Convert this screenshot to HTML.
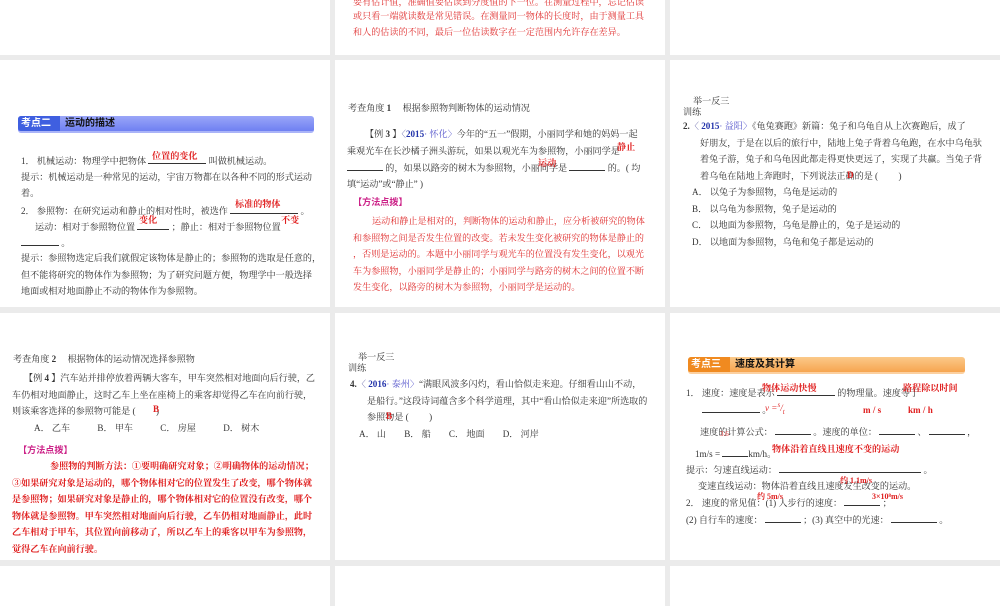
<!DOCTYPE html>
<html><head><meta charset="utf-8"><style>
body{margin:0;width:1000px;height:600px;background:#ebebeb;position:relative;overflow:hidden;font-family:"Liberation Serif","Noto Serif CJK SC",serif;font-size:9.1px;color:#333}
.p{position:absolute;background:#fff;overflow:hidden}
.t{position:absolute;white-space:nowrap;line-height:12px}
.r{color:#e03030}
.rb{color:#e02020;font-weight:bold}
.b{color:#2233aa;font-weight:bold}
.u{display:inline-block;border-bottom:1px solid #333;height:9px;vertical-align:baseline}
.m{color:#cc2288;font-weight:bold;font-family:"Liberation Sans","Noto Sans CJK SC",sans-serif}
</style></head><body>
<div class="p" style="left:0;top:0;width:330px;height:55px"></div>
<div class="p" style="left:335px;top:0;width:330px;height:55px">
<div class="t r" style="left:18px;top:-4px">要有估计值，准确值要估读到分度值的下一位。在测量过程中，忘记估读</div>
<div class="t r" style="left:18px;top:10px">或只看一端就读数是常见错误。在测量同一物体的长度时，由于测量工具</div>
<div class="t r" style="left:18px;top:26px">和人的估读的不同，最后一位估读数字在一定范围内允许存在差异。</div>
</div>
<div class="p" style="left:670px;top:0;width:330px;height:55px"></div>

<div class="p" style="left:0;top:60px;width:330px;height:247px">
<div style="position:absolute;left:18px;top:56px;width:296px;height:15px;background:linear-gradient(#9aa6f8,#6f80f2);border-radius:3px;border-bottom:2px solid #aab4f8"></div>
<div style="position:absolute;left:18px;top:56px;width:42px;height:15px;background:#3f5fe0;border-radius:3px 0 0 3px"></div>
<div class="t" style="left:21px;top:58px;color:#fff;font-weight:bold;font-family:'Liberation Sans','Noto Sans CJK SC',sans-serif;font-size:10px">考点二</div>
<div class="t" style="left:65px;top:58px;color:#111;font-weight:bold;font-family:'Liberation Sans','Noto Sans CJK SC',sans-serif;font-size:10px">运动的描述</div>
<div class="t" style="left:21px;top:94px">1． 机械运动：物理学中把物体 <span class="u" style="width:58px"></span> 叫做机械运动。</div>
<div class="t rb" style="left:152px;top:90px">位置的变化</div>
<div class="t" style="left:21px;top:111px">提示：机械运动是一种常见的运动，宇宙万物都在以各种不同的形式运动</div>
<div class="t" style="left:21px;top:127px">着。</div>
<div class="t" style="left:21px;top:144px">2． 参照物：在研究运动和静止的相对性时，被选作 <span class="u" style="width:68px"></span> 。</div>
<div class="t rb" style="left:235px;top:138px">标准的物体</div>
<div class="t" style="left:35px;top:160px">运动：相对于参照物位置 <span class="u" style="width:32px"></span> ；静止：相对于参照物位置</div>
<div class="t rb" style="left:139px;top:154px">变化</div>
<div class="t rb" style="left:281px;top:154px">不变</div>
<div class="t" style="left:21px;top:176px"><span class="u" style="width:38px"></span> 。</div>
<div class="t" style="left:21px;top:192px">提示：参照物选定后我们就假定该物体是静止的；参照物的选取是任意的，</div>
<div class="t" style="left:21px;top:209px">但不能将研究的物体作为参照物；为了研究问题方便，物理学中一般选择</div>
<div class="t" style="left:21px;top:225px">地面或相对地面静止不动的物体作为参照物。</div>
</div>

<div class="p" style="left:335px;top:60px;width:330px;height:247px">
<div class="t" style="left:13px;top:42px">考查角度 <b>1</b>　 根据参照物判断物体的运动情况</div>
<div class="t" style="left:30px;top:68px">【例 <b>3</b> 】<span style="color:#66a">〈</span><span class="b">2015</span><span style="color:#55c">· 怀化〉</span>今年的“五一”假期，小丽同学和她的妈妈一起</div>
<div class="t" style="left:12px;top:85px">乘观光车在长沙橘子洲头游玩，如果以观光车为参照物，小丽同学是</div>
<div class="t rb" style="left:282px;top:81px">静止</div>
<div class="t" style="left:12px;top:101px"><span class="u" style="width:36px"></span> 的，如果以路旁的树木为参照物，小丽同学是 <span class="u" style="width:36px"></span> 的。( 均</div>
<div class="t rb" style="left:203px;top:97px">运动</div>
<div class="t" style="left:12px;top:118px">填“运动”或“静止” )</div>
<div class="t m" style="left:18px;top:136px">【方法点拨】</div>
<div class="t r" style="left:37px;top:155px">运动和静止是相对的，判断物体的运动和静止，应分析被研究的物体</div>
<div class="t r" style="left:18px;top:172px">和参照物之间是否发生位置的改变。若未发生变化被研究的物体是静止的</div>
<div class="t r" style="left:18px;top:188px">，否则是运动的。本题中小丽同学与观光车的位置没有发生变化，以观光</div>
<div class="t r" style="left:18px;top:205px">车为参照物，小丽同学是静止的；小丽同学与路旁的树木之间的位置不断</div>
<div class="t r" style="left:18px;top:221px">发生变化，以路旁的树木为参照物，小丽同学是运动的。</div>
</div>

<div class="p" style="left:670px;top:60px;width:330px;height:247px">
<div class="t" style="left:23px;top:35px">举一反三</div>
<div class="t" style="left:13px;top:46px">训练</div>
<div class="t" style="left:13px;top:60px"><b>2.</b><span style="color:#66a">〈</span> <span class="b">2015</span><span style="color:#55c">· 益阳〉</span>《龟兔赛跑》新篇：兔子和乌龟自从上次赛跑后，成了</div>
<div class="t" style="left:30px;top:77px">好朋友，于是在以后的旅行中，陆地上兔子背着乌龟跑，在水中乌龟驮</div>
<div class="t" style="left:30px;top:93px">着兔子游，兔子和乌龟因此都走得更快更远了，实现了共赢。当兔子背</div>
<div class="t" style="left:30px;top:110px">着乌龟在陆地上奔跑时，下列说法正确的是 (　　 )</div>
<div class="t rb" style="left:177px;top:109px">D</div>
<div class="t" style="left:22px;top:126px">A． 以兔子为参照物，乌龟是运动的</div>
<div class="t" style="left:22px;top:143px">B． 以乌龟为参照物，兔子是运动的</div>
<div class="t" style="left:22px;top:159px">C． 以地面为参照物，乌龟是静止的，兔子是运动的</div>
<div class="t" style="left:22px;top:176px">D． 以地面为参照物，乌龟和兔子都是运动的</div>
</div>

<div class="p" style="left:0;top:313px;width:330px;height:247px">
<div class="t" style="left:13px;top:40px">考查角度 <b>2</b>　 根据物体的运动情况选择参照物</div>
<div class="t" style="left:24px;top:59px">【例 <b>4</b> 】汽车站并排停放着两辆大客车，甲车突然相对地面向后行驶，乙</div>
<div class="t" style="left:12px;top:76px">车仍相对地面静止，这时乙车上坐在座椅上的乘客却觉得乙车在向前行驶，</div>
<div class="t" style="left:12px;top:92px">则该乘客选择的参照物可能是 (　　 )</div>
<div class="t rb" style="left:153px;top:90px">B</div>
<div class="t" style="left:34px;top:109px">A． 乙车　　　B． 甲车　　　C． 房屋　　　D． 树木</div>
<div class="t m" style="left:18px;top:131px">【方法点拨】</div>
<div class="t rb" style="left:50px;top:147px">参照物的判断方法：①要明确研究对象；②明确物体的运动情况；</div>
<div class="t rb" style="left:12px;top:164px">③如果研究对象是运动的，哪个物体相对它的位置发生了改变，哪个物体就</div>
<div class="t rb" style="left:12px;top:180px">是参照物；如果研究对象是静止的，哪个物体相对它的位置没有改变，哪个</div>
<div class="t rb" style="left:12px;top:197px">物体就是参照物。甲车突然相对地面向后行驶，乙车仍相对地面静止，此时</div>
<div class="t rb" style="left:12px;top:213px">乙车相对于甲车，其位置向前移动了，所以乙车上的乘客以甲车为参照物，</div>
<div class="t rb" style="left:12px;top:230px">觉得乙车在向前行驶。</div>
</div>

<div class="p" style="left:335px;top:313px;width:330px;height:247px">
<div class="t" style="left:23px;top:38px">举一反三</div>
<div class="t" style="left:13px;top:49px">训练</div>
<div class="t" style="left:15px;top:65px"><b>4.</b><span style="color:#66a">〈</span> <span class="b">2016</span><span style="color:#55c">· 泰州〉</span>“满眼风波多闪灼，看山恰似走来迎。仔细看山山不动，</div>
<div class="t" style="left:32px;top:82px">是船行。”这段诗词蕴含多个科学道理，其中“看山恰似走来迎”所选取的</div>
<div class="t" style="left:32px;top:98px">参照物是 (　　 )</div>
<div class="t rb" style="left:51px;top:97px">B</div>
<div class="t" style="left:24px;top:115px">A． 山　　B． 船　　C． 地面　　D． 河岸</div>
</div>

<div class="p" style="left:670px;top:313px;width:330px;height:247px">
<div style="position:absolute;left:18px;top:44px;width:277px;height:15px;background:linear-gradient(#fbc98a,#f6a550);border-radius:3px;border-bottom:2px solid #fcd0a0"></div>
<div style="position:absolute;left:18px;top:44px;width:42px;height:15px;background:#f08a20;border-radius:3px 0 0 3px"></div>
<div class="t" style="left:21px;top:46px;color:#fff;font-weight:bold;font-family:'Liberation Sans','Noto Sans CJK SC',sans-serif;font-size:10px">考点三</div>
<div class="t" style="left:65px;top:46px;color:#111;font-weight:bold;font-family:'Liberation Sans','Noto Sans CJK SC',sans-serif;font-size:10px">速度及其计算</div>
<div class="t" style="left:16px;top:73px">1． 速度：速度是表示 <span class="u" style="width:58px"></span> 的物理量。速度等于</div>
<div class="t rb" style="left:92px;top:69px">物体运动快慢</div>
<div class="t rb" style="left:233px;top:69px">路程除以时间</div>
<div class="t" style="left:32px;top:90px"><span class="u" style="width:58px"></span> 。</div>
<div class="t r" style="left:95px;top:86px;font-style:italic">v =<sup style="font-size:7px">s</sup>/<sub style="font-size:7px">t</sub></div>
<div class="t rb" style="left:193px;top:91px">m / s</div>
<div class="t rb" style="left:238px;top:91px">km / h</div>
<div class="t" style="left:30px;top:112px">速度的计算公式： <span class="u" style="width:36px"></span> 。速度的单位： <span class="u" style="width:36px"></span> 、 <span class="u" style="width:36px"></span> ，</div>
<div class="t r" style="left:50px;top:115px;font-size:7px">3.6</div>
<div class="t" style="left:25px;top:134px">1m/s = <span class="u" style="width:26px"></span>km/h。</div>
<div class="t rb" style="left:102px;top:130px">物体沿着直线且速度不变的运动</div>
<div class="t" style="left:16px;top:150px">提示：匀速直线运动： <span class="u" style="width:142px"></span> 。</div>
<div class="t" style="left:28px;top:167px">变速直线运动：物体沿着直线且速度发生改变的运动。</div>
<div class="t rb" style="left:170px;top:162px;font-size:8px">约 1.1m/s</div>
<div class="t" style="left:16px;top:183px">2． 速度的常见值：(1) 人步行的速度： <span class="u" style="width:36px"></span> ；</div>
<div class="t rb" style="left:87px;top:178px;font-size:8px">约 5m/s</div>
<div class="t rb" style="left:202px;top:178px;font-size:8px">3×10⁸m/s</div>
<div class="t" style="left:16px;top:200px">(2) 自行车的速度： <span class="u" style="width:36px"></span> ；(3) 真空中的光速： <span class="u" style="width:46px"></span> 。</div>
</div>

<div class="p" style="left:0;top:566px;width:330px;height:40px"></div>
<div class="p" style="left:335px;top:566px;width:330px;height:40px"></div>
<div class="p" style="left:670px;top:566px;width:330px;height:40px"></div>
</body></html>
